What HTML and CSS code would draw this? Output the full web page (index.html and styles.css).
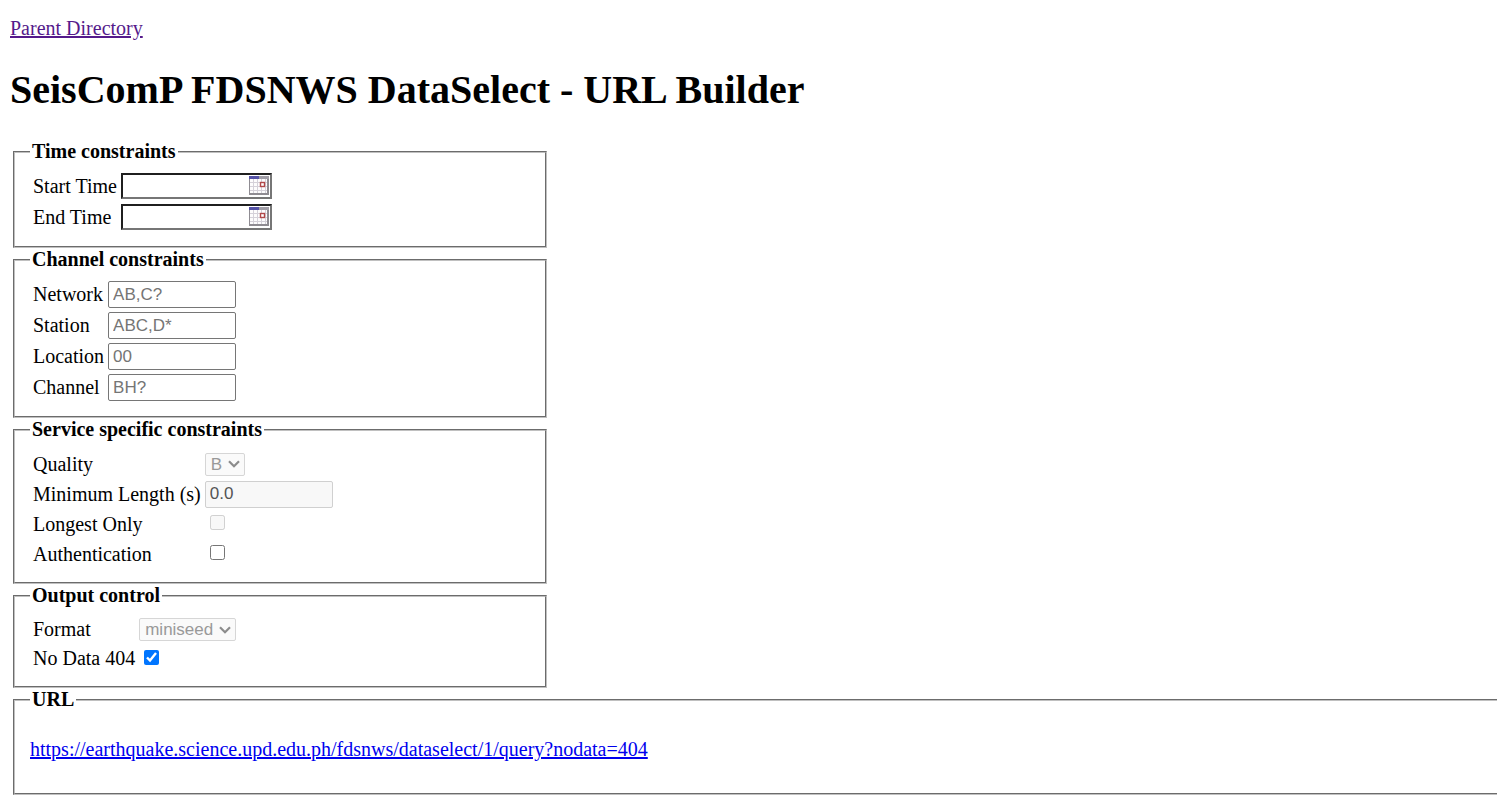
FILE: index.html
```
<!DOCTYPE html>
<html lang="en">
<head>
<meta charset="utf-8">
<title>SeisComP FDSNWS DataSelect - URL Builder</title>
<link rel="stylesheet" href="styles.css">
</head>
<body>
<svg class="sprite" aria-hidden="true">
  <symbol id="calendar" viewBox="0 0 20 19">
    <rect width="20" height="19" fill="#8f8c92"/>
    <rect x="1" y="3" width="17" height="14" fill="#fdfcfd"/>
    <path d="M0 0h10v3H0z" fill="#5552a6"/>
    <path d="M10 0h10v3H10z" fill="#a09da6"/>
    <path d="M4.500 3v14M8.500 3v14M12.500 3v14M16.500 3v14M1 6.500h17M1 10.500h17M1 14.500h17" stroke="#d5d1d9" fill="none"/>
    <rect x="11.500" y="6.500" width="4" height="4" fill="#fff" stroke="#b0484a" stroke-width="1.400"/>
  </symbol>
  <symbol id="chevron" viewBox="0 0 12 8">
    <path d="M1 1.200 6 6.200l5-5" fill="none" stroke="#8c8c8c" stroke-width="2.200"/>
  </symbol>
</svg>
<a class="parent" href="#parent">Parent Directory</a>
<h1>SeisComP FDSNWS DataSelect - URL Builder</h1>
<form>
<fieldset>
  <legend>Time constraints</legend>
  <table class="time">
    <tr><td><label for="start">Start Time</label></td><td><div class="date"><input id="start" type="text"><button type="button" aria-label="Pick start time"><svg><use href="#calendar"/></svg></button></div></td></tr>
    <tr><td><label for="end">End Time</label></td><td><div class="date"><input id="end" type="text"><button type="button" aria-label="Pick end time"><svg><use href="#calendar"/></svg></button></div></td></tr>
  </table>
</fieldset>
<fieldset>
  <legend>Channel constraints</legend>
  <table>
    <tr><td><label for="net">Network</label></td><td><input class="text" id="net" type="text" placeholder="AB,C?"></td></tr>
    <tr><td><label for="sta">Station</label></td><td><input class="text" id="sta" type="text" placeholder="ABC,D*"></td></tr>
    <tr><td><label for="loc">Location</label></td><td><input class="text" id="loc" type="text" placeholder="00"></td></tr>
    <tr><td><label for="cha">Channel</label></td><td><input class="text" id="cha" type="text" placeholder="BH?"></td></tr>
  </table>
</fieldset>
<fieldset>
  <legend>Service specific constraints</legend>
  <table class="service">
    <tr><td><label for="quality">Quality</label></td><td><div class="select"><select id="quality" disabled><option>B</option></select><svg><use href="#chevron"/></svg></div></td></tr>
    <tr><td><label for="minlen">Minimum Length (s)</label></td><td><input class="text" id="minlen" type="text" value="0.0" disabled></td></tr>
    <tr><td><label for="longest">Longest Only</label></td><td><input id="longest" type="checkbox" disabled></td></tr>
    <tr><td><label for="auth">Authentication</label></td><td><input id="auth" type="checkbox"></td></tr>
  </table>
</fieldset>
<fieldset>
  <legend>Output control</legend>
  <table class="output">
    <tr><td><label for="format">Format</label></td><td><div class="select"><select id="format" disabled><option>miniseed</option></select><svg><use href="#chevron"/></svg></div></td></tr>
    <tr><td><label for="nodata">No Data 404</label></td><td><input id="nodata" type="checkbox" checked></td></tr>
  </table>
</fieldset>
<fieldset class="url">
  <legend>URL</legend>
  <p><a href="#query">https://earthquake.science.upd.edu.ph/fdsnws/dataselect/1/query?nodata=404</a></p>
</fieldset>
</form>
</body>
</html>
```
FILE: styles.css
```
body {
  margin: 0;
  padding: 17px 0 0 10px;
  font: 20px/23px "Liberation Serif", "Times New Roman", serif;
  color: #000;
  background: #fff;
}
.sprite { display: none; }
a { color: #0000ee; }
.parent { display: block; width: fit-content; color: #551a8b; }
h1 {
  margin: 27px 0;
  font-size: 40px;
  line-height: 46px;
}
fieldset {
  box-sizing: border-box;
  width: 534px;
  margin: 0 0 0 3px;
  padding: 7px 15px 12px;
  border: 2px groove #c0c0c0;
}
.url { width: auto; border-right: 0; }
legend { padding: 0 2px; font-weight: bold; }
table { border-spacing: 2px; }
td { height: 27px; padding: 1px; vertical-align: middle; }
.time td:last-child { vertical-align: top; }
.service td { height: 28px; padding: 0 1px; }
.output td { height: 27px; padding: 0 1px; }
input, select {
  box-sizing: border-box;
  font: 17px "Liberation Sans", Arial, sans-serif;
}
.text {
  display: block;
  width: 128px;
  height: 27px;
  padding: 1px 4px;
  border: 1px solid #767676;
  border-radius: 2px;
}
.text::placeholder { color: #757575; }
.text:disabled {
  color: #545454;
  background: #f8f8f8;
  border-color: #d0d0d0;
}
.date {
  display: flex;
  align-items: center;
  box-sizing: border-box;
  width: 151px;
  height: 26px;
  border: 2px solid;
  border-color: #1f1f1f #767676 #767676 #1f1f1f;
}
.date input {
  flex: 1;
  min-width: 0;
  padding: 1px 3px;
  border: 0;
  outline: 0;
}
.date button {
  padding: 0 1px 2px 0;
  border: 0;
  background: none;
}
.date svg { display: block; width: 20px; height: 19px; }
.select {
  display: grid;
  align-items: center;
  justify-items: end;
  width: fit-content;
}
.select select, .select svg { grid-area: 1 / 1; }
.select svg {
  width: 12px;
  height: 8px;
  margin-right: 5px;
  pointer-events: none;
}
select {
  appearance: none;
  height: 23px;
  padding: 0 21px 0 5px;
  border: 1px solid #767676;
  border-radius: 2px;
}
select:disabled {
  color: #999;
  background: #fafafa;
  border-color: #d6d6d6;
  opacity: 1;
}
input[type="checkbox"] {
  display: block;
  width: 15px;
  height: 15px;
  margin: 0 5px 3px;
}
```
